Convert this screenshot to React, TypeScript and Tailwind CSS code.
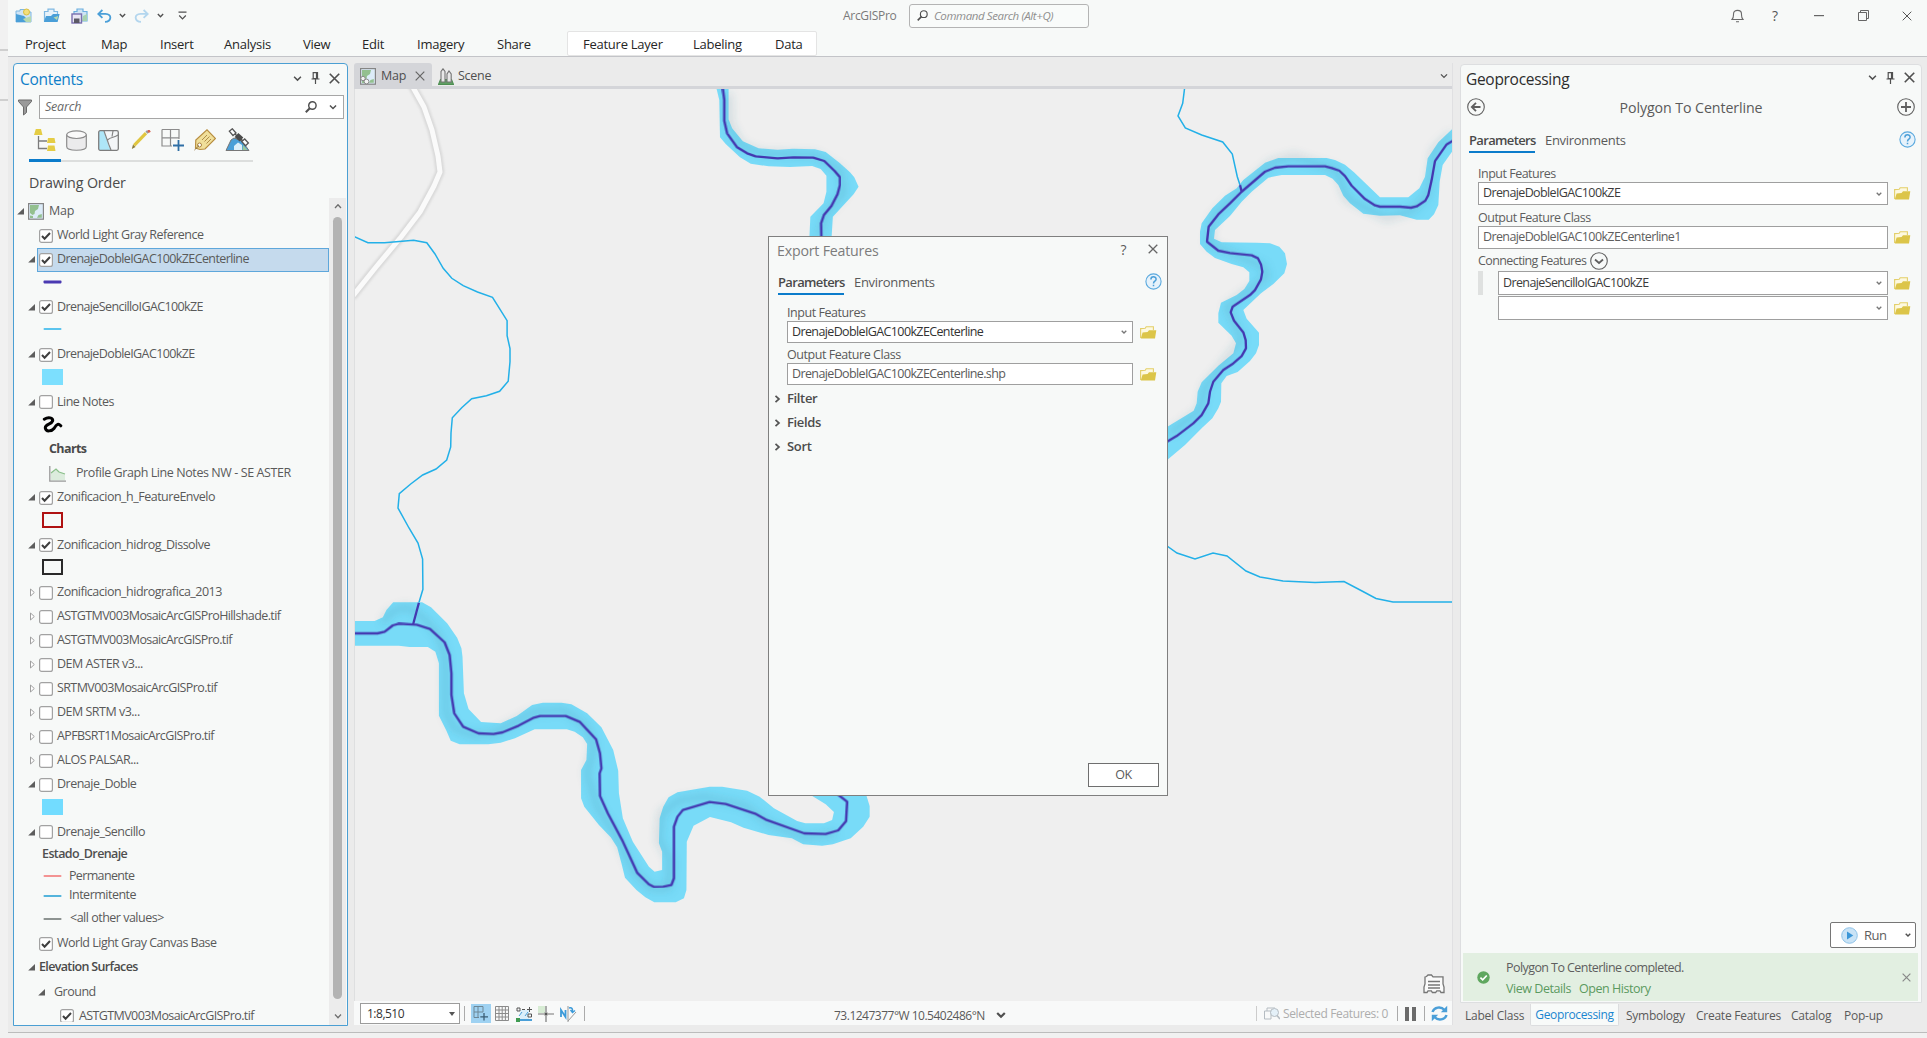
import React from "react";

type P = { children?: React.ReactNode; className?: string };

const Chev = ({ s = 10, w = 1.6, c = "#505050" }: { s?: number; w?: number; c?: string }) => (
  <svg width={s} height={s} viewBox="0 0 10 10" fill="none" stroke={c} strokeWidth={w} className="shrink-0">
    <path d="M1.2 3 L5 6.8 L8.8 3" />
  </svg>
);
const X = ({ s = 11, w = 1.5, c = "#505050" }: { s?: number; w?: number; c?: string }) => (
  <svg width={s} height={s} viewBox="0 0 10 10" fill="none" stroke={c} strokeWidth={w} className="shrink-0">
    <path d="M.7 .7 L9.3 9.3 M9.3 .7 L.7 9.3" />
  </svg>
);
const Pin = () => (
  <svg width="9" height="12" viewBox="0 0 9 12" fill="none" stroke="#505050" strokeWidth="1.2" className="shrink-0">
    <path d="M2.2 .7 H6.5 V6.5 H2.2 Z M.5 7 H8.5 M4.5 7 V12" />
    <path d="M5.8 1 V6.5" strokeWidth="1.8" />
  </svg>
);
const Folder = () => (
  <svg width="17" height="13" viewBox="0 0 17 13" className="shrink-0">
    <path d="M.6 12 V2.6 L5.2 2.3 L6.2 .8 H13.4 V4" fill="#fdf9e0" stroke="#e3cf6a" strokeWidth="1.1" />
    <path d="M.8 12.4 L2.6 6.6 L7.6 6 L9 4.2 H16.3 L15 12.4 Z" fill="#dcc549" />
  </svg>
);
const Help = () => (
  <svg width="17" height="17" viewBox="0 0 17 17" fill="none" className="shrink-0">
    <circle cx="8.5" cy="8.5" r="7.6" fill="#e6f2fb" stroke="#5aa9de" strokeWidth="1.1" />
    <path d="M5.9 6.4 C5.9 3 11.1 3 11.1 6.2 C11.1 8.2 8.5 8.2 8.5 10.4 M8.5 11.8 V13.3" stroke="#4b9fd8" strokeWidth="1.5" />
  </svg>
);
const Magnifier = ({ s = 12, w = 1.6 }: { s?: number; w?: number }) => (
  <svg width={s} height={s} viewBox="0 0 12 12" fill="none" stroke="#505050" className="shrink-0">
    <circle cx="7.4" cy="4.5" r="3.7" strokeWidth={w * 0.9} />
    <path d="M4.8 7.2 L.8 11.3" strokeWidth={w * 1.25} />
  </svg>
);
const Check = ({ on = false }: { on?: boolean }) => (
  <svg width="14" height="14" viewBox="0 0 14 14" className="shrink-0">
    <rect x=".6" y=".6" width="12.8" height="12.8" rx="2" fill="#fff" stroke="#a2a2a2" strokeWidth="1.2" />
    {on && <path d="M3 7 L5.6 9.8 L11 4" fill="none" stroke="#3f3f3f" strokeWidth="2" />}
  </svg>
);
const Tri = ({ open = true }: { open?: boolean }) =>
  open ? (
    <svg width="7" height="7" viewBox="0 0 7 7" className="shrink-0">
      <path d="M7 0 V6.6 H.2 Z" fill="#5d5d5d" />
    </svg>
  ) : (
    <svg width="7" height="9" viewBox="0 0 7 9" className="shrink-0 ml-[2px]">
      <path d="M1.5 1 L5.3 4.5 L1.5 8 Z" fill="#fff" stroke="#a0a0a0" />
    </svg>
  );
const MapIcon = ({ link = false }: { link?: boolean }) => (
  <svg width="16" height="17" viewBox="0 0 16 17" className="shrink-0">
    <rect x=".6" y=".6" width="14.8" height="15.6" fill="#dcecf8" stroke="#858585" strokeWidth="1.2" />
    <path d="M2 2 H11 L10 6 L7 8 L6.5 11 L4.5 12 L2 10 Z" fill="#93c08f" />
    <path d="M10.5 12 L13.8 11 V14.8 H9 Z M2 12.5 L5 13 V15 H2 Z" fill="#93c08f" />
    {link && (
      <g fill="none" stroke="#8a8a8a">
        <circle cx="3" cy="10.5" r="2.2" fill="#f3f3f3" />
        <circle cx="6.5" cy="13.5" r="2.4" fill="#f3f3f3" />
      </g>
    )}
  </svg>
);

const menu: [string, string][] = [
  ["Project", "w-[76px]"],
  ["Map", "w-[59px]"],
  ["Insert", "w-[64px]"],
  ["Analysis", "w-[79px]"],
  ["View", "w-[59px]"],
  ["Edit", "w-[55px]"],
  ["Imagery", "w-[80px]"],
  ["Share", "w-[70px]"],
];

function Header() {
  return (
    <header className="h-[57px] bg-[#f7f9f8] border-b border-[#c3c4c8] flex flex-col shrink-0">
      <div className="h-[31px] flex items-center pr-[8px]">
        <div className="flex items-center w-[180px] pl-[7px] shrink-0">
          <svg width="17" height="16" viewBox="0 0 17 16" className="shrink-0">
            <path d="M1 3 H5 V1.5 H10 V4 H16 V14 H1 Z" fill="#cfe4f5" stroke="#7fb8e2" />
            <path d="M1 6 L9 8 L15 14 H1 Z" fill="#4a9fd8" />
            <path d="M8 11 L16 8 V14 H11 Z" fill="#b7d9ae" />
            <circle cx="11.5" cy="4" r="3" fill="#f3df7c" stroke="#dbbf3f" />
          </svg>
          <svg width="17" height="15" viewBox="0 0 17 15" className="shrink-0 ml-[11px]">
            <path d="M1.5 13 V3.5 H5 V1.2 H11 V3.5 H14.5 V6" fill="#e7f2fa" stroke="#7fb8e2" strokeWidth="1.2" />
            <path d="M.8 14 L3 8 H8 L10 6 H16.6 L14.6 14 Z" fill="#4a9fd8" />
            <path d="M10.5 9.5 L15.2 8 L14 12 Z" fill="#b7d9ae" />
          </svg>
          <svg width="17" height="16" viewBox="0 0 17 16" className="shrink-0 ml-[11px]">
            <path d="M3 6 V3.5 H6 V1 H12 V3.5 H16 V13 H11" fill="#cfe4f5" stroke="#6db0df" strokeWidth="1.2" />
            <path d="M12 8 L16 6 V13 H11 Z" fill="#a8d2b0" />
            <rect x="1" y="6" width="9.5" height="9" fill="#e9e6f4" stroke="#7a6fae" strokeWidth="1.4" />
            <rect x="3" y="10.5" width="5.5" height="4.5" fill="#5c5a66" />
          </svg>
          <svg width="15" height="14" viewBox="0 0 15 14" fill="none" stroke="#4a9fd8" strokeWidth="1.8" className="shrink-0 ml-[9px]">
            <path d="M5.4 1 L1.3 4.9 L5.4 8.8 M1.5 4.9 H8.5 C15.5 5 14.5 12.6 8 12.8" />
          </svg>
          <span className="ml-[7px] flex"><Chev s={7} w={2} /></span>
          <svg width="15" height="14" viewBox="0 0 15 14" fill="none" stroke="#b3d6ee" strokeWidth="1.8" className="shrink-0 ml-[8px]">
            <path d="M9.6 1 L13.7 4.9 L9.6 8.8 M13.5 4.9 H6.5 C-.5 5 .5 12.6 7 12.8" />
          </svg>
          <span className="ml-[8px] flex"><Chev s={7} w={2} /></span>
          <svg width="9" height="10" viewBox="0 0 9 10" fill="none" stroke="#505050" strokeWidth="1.2" className="shrink-0 ml-[14px]">
            <path d="M.5 1.2 H8.5 M1.2 4.5 L4.5 7.8 L7.8 4.5" />
          </svg>
        </div>
        <span className="ml-[655px] w-[66px] text-[12px] text-[#7a7a7a] tracking-[-0.3px]">ArcGISPro</span>
        <div className="w-[180px] h-[24px] border border-[#b4b4b4] rounded-[3px] bg-[#f9fbfa] flex items-center pl-[7px] gap-[6px]">
          <Magnifier s={11} w={1.4} />
          <span className="italic text-[11.5px] text-[#8f8f8f] tracking-[-0.4px]">Command Search (Alt+Q)</span>
        </div>
        <div className="ml-auto flex items-center">
          <svg width="13" height="15" viewBox="0 0 13 15" fill="none" stroke="#6a6a6a" strokeWidth="1.1">
            <path d="M1 11.5 H12 C10.3 10 10.5 8.5 10.5 6 C10.5 1.2 2.5 1.2 2.5 6 C2.5 8.5 2.7 10 1 11.5 Z M5 13.8 H8" />
          </svg>
          <span className="ml-[28px] text-[14px] text-[#555]">?</span>
          <svg width="10" height="2" className="ml-[36px]"><rect width="10" height="1.2" fill="#666" /></svg>
          <svg width="11" height="11" viewBox="0 0 11 11" fill="none" stroke="#666" className="ml-[34px]">
            <path d="M.5 2.5 H8.5 V10.5 H.5 Z M2.5 2.5 V.5 H10.5 V8.5 H8.5" />
          </svg>
          <span className="ml-[33px] mr-[7px]"><X s={10} w={1} c="#555" /></span>
        </div>
      </div>
      <div className="h-[25px] flex items-center text-[13px] text-[#262626] pl-[17px] tracking-[-0.25px]">
        {menu.map(([m, w]) => (
          <span key={m} className={`${w} shrink-0 pt-[2px]`}>{m}</span>
        ))}
        <div className="flex items-center h-[25px] w-[250px] bg-white border border-[#e4e4e4] rounded-[2px] pl-[15px] pt-[2px]">
          <span className="w-[110px]">Feature Layer</span>
          <span className="w-[82px]">Labeling</span>
          <span>Data</span>
        </div>
      </div>
    </header>
  );
}

function Row({ open, on, label, sel, plain }: { open?: boolean; on?: boolean; label: string; sel?: boolean; plain?: boolean }) {
  return (
    <div className="h-[24px] flex items-center pl-[13px] shrink-0">
      <span className="w-[9px] flex justify-center shrink-0">{open !== undefined && <Tri open={open} />}</span>
      <div className={sel ? "h-[24px] w-[292px] flex items-center border border-[#5ea7db] bg-[#c5daed] pl-px ml-px" : "h-[24px] flex items-center pl-[3px]"}>
        <Check on={on} />
        <span className={plain ? "ml-[4px] whitespace-nowrap tracking-[-0.5px]" : "ml-[4px] whitespace-nowrap tracking-[-0.6px]"}>{label}</span>
      </div>
    </div>
  );
}
const Sym = ({ children }: P) => <div className="h-[23.5px] flex items-center pl-[28px] pb-[3px] shrink-0">{children}</div>;
const Line = ({ c, h = 1.6 }: { c: string; h?: number }) => (
  <svg width="20" height="6" className="shrink-0">
    <rect x="1.5" y={3 - h / 2} width="18" height={h} rx=".8" fill={c} />
  </svg>
);
const Swatch = ({ cls }: { cls: string }) => <span className={`block w-[21px] h-[16px] ${cls}`} />;

function Contents() {
  return (
    <section className="w-[335px] h-[963px] border-[1.5px] border-[#4b9fd3] rounded-t-[4px] bg-[#f7f9f8] flex flex-col overflow-hidden text-[#5a5a5a] text-[12.5px] tracking-[-0.5px]">
      <div className="h-[28px] flex items-center pl-[6px] pr-[7px] shrink-0">
        <span className="text-[15.5px] text-[#0f7fc8] grow pt-[3px] tracking-[-0.3px]">Contents</span>
        <Chev s={9} />
        <span className="ml-[9px] flex"><Pin /></span>
        <span className="ml-[9px] flex"><X /></span>
      </div>
      <div className="flex items-center h-[28px] mt-[1px] pl-[4px] shrink-0">
        <svg width="14" height="17" viewBox="0 0 14 17" fill="#9a9a9a" stroke="#6a6a6a" className="shrink-0">
          <path d="M.5 1 H13.5 V2.5 L8.5 8 V13.5 L5.5 16 V8 L.5 2.5 Z" />
        </svg>
        <div className="ml-[7px] w-[305px] h-[24px] bg-white border border-[#a6a6a6] flex items-center pl-[5px] pr-[6px]">
          <span className="italic grow text-[#6a6a6a] tracking-[-0.2px] pt-px">Search</span>
          <Magnifier s={12} />
          <span className="ml-[12px] flex"><Chev s={8} w={1.8} /></span>
        </div>
      </div>
      <div className="flex items-center h-[37px] pl-[14px] mt-[1px] pb-px shrink-0">
        <div className="w-[32px] flex justify-center">
          <svg width="23" height="24" viewBox="0 0 23 24">
            <path d="M5.5 8 V20.5 H14 M5.5 13 H14" fill="none" stroke="#7c7c7c" strokeWidth="1.3" />
            <path d="M1 7 L2.8 1 H8 L9.5 7 Z M14 15 L15 10 H21.5 L22.5 15 Z M14 23 L15 17.5 H21.5 L22.5 23 Z" fill="#e5cd45" />
          </svg>
        </div>
        <div className="w-[32px] flex justify-center">
          <svg width="21" height="21" viewBox="0 0 21 21" fill="#ebebec" stroke="#8c8c8c" strokeWidth="1.2">
            <path d="M.7 4.5 V16.5 C.7 21.5 20.3 21.5 20.3 16.5 V4.5" />
            <ellipse cx="10.5" cy="4.7" rx="9.8" ry="3.8" fill="#fafafa" />
          </svg>
        </div>
        <div className="w-[33px] flex justify-center">
          <svg width="21" height="21" viewBox="0 0 21 21">
            <rect x=".7" y=".7" width="19.6" height="19.6" rx="1.5" fill="#f4f6f8" />
            <path d="M1 1 H6 L11 17 L13 20 H1 Z" fill="#aee6f8" />
            <path d="M6 1 L11 15 L13 20 M9.5 10 C13 6.5 16 8 20 5 M14 6.5 L15 1" fill="none" stroke="#858585" strokeWidth="1.2" />
            <rect x=".7" y=".7" width="19.6" height="19.6" rx="1.5" fill="none" stroke="#7d7d7d" strokeWidth="1.3" />
          </svg>
        </div>
        <div className="w-[31px] flex justify-center">
          <svg width="20" height="20" viewBox="0 0 20 20">
            <path d="M3.2 15.3 L15 3.2" stroke="#e0c640" strokeWidth="3.2" />
            <path d="M15.5 2.8 L17 1.2" stroke="#9b9b9b" strokeWidth="3" />
            <path d="M17 1.8 L19 .5" stroke="#d9644f" strokeWidth="2.8" />
            <path d="M.8 19 L2 14.5 L4.5 17 Z" fill="#8b7a3a" />
          </svg>
        </div>
        <div className="w-[33px] flex justify-center">
          <svg width="24" height="24" viewBox="0 0 24 24" fill="none">
            <path d="M1 1.5 H18 V11 M1 1.5 V18 H11 M9.5 1.5 V18 M1 9.8 H18" stroke="#8c8c8c" strokeWidth="1.2" />
            <path d="M17.5 12 V23 M12 17.5 H23" stroke="#2f6fa5" strokeWidth="1.8" />
          </svg>
        </div>
        <div className="w-[32px] flex justify-center">
          <svg width="22" height="22" viewBox="0 0 22 22">
            <path d="M1.5 19 L1.8 11 L13 .8 L21.5 9.5 L11 20 L6 20.5 Z" fill="#f0df9a" stroke="#b88f42" strokeWidth="1.2" />
            <circle cx="5.5" cy="16" r="2" fill="#fff" stroke="#a98241" />
            <path d="M8 11 L13 6 M10.5 12.5 L15.5 7.5 M12.5 14.5 L17 10" stroke="#b08c4a" />
            <path d="M5 16.5 C3 18 2 20 .5 21" fill="none" stroke="#8b6d36" />
          </svg>
        </div>
        <div className="w-[32px] flex justify-center">
          <svg width="25" height="24" viewBox="0 0 25 24">
            <path d="M1 22.5 L6 12 L9 10 L17 13 L24 22.5 Z" fill="#4a9fd8" stroke="#777" />
            <path d="M9 22 V18 L13 14.5 L17 17 V22 Z" fill="#dceffa" />
            <path d="M18 17 L22.5 22 H17.5 Z" fill="#9ac79a" />
            <path d="M7 3.5 L21 15.5" stroke="#555" strokeWidth="1.6" />
            <path d="M11.5 7 L16.5 11.5" stroke="#4b4b4b" strokeWidth="5.5" />
            <path d="M4.3 3.2 L7.3 .8 L11 5 L8 7.5 Z M16.7 13.5 L19.7 11 L23.4 15 L20.5 17.8 Z" fill="#fff" stroke="#555" strokeWidth="1.3" />
          </svg>
        </div>
      </div>
      <div className="ml-[15px] w-[224px] h-[3px] border-b-2 border-[#dcdedd] shrink-0">
        <div className="w-[32px] h-[3px] bg-[#0c7ccb]" />
      </div>
      <div className="text-[14.3px] text-[#4b4b4b] font-medium pl-[15px] mt-[10px] h-[26px] leading-[22px] tracking-[-0.15px] shrink-0">Drawing Order</div>
      <div className="flex grow min-h-0">
        <div className="w-[315px] h-[824px] overflow-hidden flex flex-col shrink-0 pt-[1.5px]">
          <div className="h-[24px] flex items-center pl-[3px] shrink-0">
            <Tri />
            <span className="ml-[4px] flex"><MapIcon /></span>
            <span className="ml-[5px] tracking-[-0.2px]">Map</span>
          </div>
          <Row on plain label="World Light Gray Reference" />
          <Row open on sel label="DrenajeDobleIGAC100kZECenterline" />
          <Sym><Line c="#4a3ab2" h={2.8} /></Sym>
          <Row open on label="DrenajeSencilloIGAC100kZE" />
          <Sym><Line c="#28b2ea" /></Sym>
          <Row open on label="DrenajeDobleIGAC100kZE" />
          <Sym><Swatch cls="bg-[#7cdffe]" /></Sym>
          <Row open plain label="Line Notes" />
          <Sym>
            <svg width="21" height="17" viewBox="0 0 21 17" fill="none" stroke="#000" strokeWidth="3" strokeLinecap="round" strokeLinejoin="round" className="shrink-0">
              <path d="M2.3 3.2 C6 .8 11.5 1.5 10.6 5 C9.5 8.5 3 8 3.3 12 C4 16.5 10 15 12 12.5 C15 7.5 16.5 7.5 18.8 9.8" />
            </svg>
          </Sym>
          <div className="h-[24px] flex items-center pl-[35px] font-bold text-[#4a4a4a] tracking-[-0.6px] shrink-0">Charts</div>
          <div className="h-[24px] flex items-center pl-[35px] shrink-0">
            <svg width="17" height="16" viewBox="0 0 17 16" fill="none" className="shrink-0">
              <path d="M2 7 L7 3 L10 6 L16 8 V14.5 H2 Z" fill="#dcecdd" />
              <path d="M2 7 L7 3 L10 6 L16 8" stroke="#8cc08c" strokeWidth="1.3" />
              <path d="M.8 0 V15.2 H17" stroke="#9a9a9a" strokeWidth="1.3" />
            </svg>
            <span className="ml-[10px] whitespace-nowrap tracking-[-0.42px]">Profile Graph Line Notes NW - SE ASTER</span>
          </div>
          <Row open on plain label="Zonificacion_h_FeatureEnvelo" />
          <Sym><Swatch cls="border-[2px] border-[#b01212]" /></Sym>
          <Row open on plain label="Zonificacion_hidrog_Dissolve" />
          <Sym><Swatch cls="border-[2px] border-[#2a2a2a]" /></Sym>
          <Row open={false} plain label="Zonificacion_hidrografica_2013" />
          <Row open={false} label="ASTGTMV003MosaicArcGISProHillshade.tif" />
          <Row open={false} label="ASTGTMV003MosaicArcGISPro.tif" />
          <Row open={false} plain label="DEM ASTER v3..." />
          <Row open={false} label="SRTMV003MosaicArcGISPro.tif" />
          <Row open={false} plain label="DEM SRTM v3..." />
          <Row open={false} label="APFBSRT1MosaicArcGISPro.tif" />
          <Row open={false} plain label="ALOS PALSAR..." />
          <Row open plain label="Drenaje_Doble" />
          <Sym><Swatch cls="bg-[#72dcff]" /></Sym>
          <Row open plain label="Drenaje_Sencillo" />
          <div className="h-[21px] flex items-center pl-[28px] font-semibold text-[#4f4f4f] tracking-[-0.6px] shrink-0">Estado_Drenaje</div>
          <div className="h-[21px] flex items-center pl-[28px] pt-px shrink-0"><Line c="#f27272" /><span className="ml-[7px] tracking-[-0.65px]">Permanente</span></div>
          <div className="h-[19.5px] flex items-center pl-[28px] shrink-0"><Line c="#54b4dc" h={2} /><span className="ml-[7px]">Intermitente</span></div>
          <div className="h-[26px] flex items-center pl-[28px] shrink-0"><Line c="#8d9391" h={2} /><span className="ml-[8px]">&lt;all other values&gt;</span></div>
          <Row on plain label="World Light Gray Canvas Base" />
          <div className="h-[24px] flex items-center pl-[14px] font-semibold text-[#4a4a4a] tracking-[-0.65px] shrink-0"><Tri /><span className="ml-[4px]">Elevation Surfaces</span></div>
          <div className="h-[26px] flex items-center pl-[24px] shrink-0"><Tri /><span className="ml-[9px]">Ground</span></div>
          <div className="h-[21px] flex items-center pl-[46px] shrink-0"><Check on /><span className="ml-[5px] tracking-[-0.6px]">ASTGTMV003MosaicArcGISPro.tif</span></div>
        </div>
        <div className="w-[17px] bg-[#ececec] flex flex-col items-center shrink-0">
          <svg width="8" height="18" viewBox="0 0 8 18" fill="none" stroke="#6e6e6e" strokeWidth="1.3"><path d="M1 10 L4 6.8 L7 10" /></svg>
          <div className="w-[9px] h-[783px] rounded-full bg-[#b3b3b3] mt-[1px]" />
          <svg width="8" height="20" viewBox="0 0 8 20" fill="none" stroke="#6e6e6e" strokeWidth="1.3" className="mt-[6px]"><path d="M1 9.5 L4 12.7 L7 9.5" /></svg>
        </div>
      </div>
    </section>
  );
}

const riverA = "M1054 85 L1088 85 L1088 178 L1098 205 L1128 244 L1172 265 L1225 269 L1268 266 L1330 268 L1360 276 L1400 310 L1428 337 L1440 352 L1452 380 L1438 403 L1380 470 L1376 540 L1314 540 L1317 470 L1354 430 L1362 395 L1362 347 L1346 327 L1322 318 L1260 321 L1200 319 L1150 311 L1120 292 L1080 252 L1064 232 L1062 120 Z";
const centerA = "M1072 85 L1076 120 L1076 182 L1084 220 L1112 262 L1140 280 L1164 289 L1225 295 L1270 292 L1325 293 L1356 303 L1385 333 L1400 352 L1400 375 L1393 403 L1376 438 L1355 465 L1347 490 L1348 540";
const riverB = "M30 183 L97 183 L120 172 L130 150 L149 127 L230 127 L255 142 L300 190 L328 233 L340 265 L343 290 L347 400 L360 447 L395 486 L450 490 L495 468 L538 435 L568 428 L620 428 L648 433 L692 460 L732 502 L765 570 L779 632 L781 700 L792 775 L820 845 L865 920 L881 935 L902 930 L902 875 L893 850 L895 775 L905 740 L920 712 L945 697 L1035 680 L1070 680 L1140 692 L1175 710 L1215 745 L1280 783 L1303 790 L1355 790 L1378 780 L1383 756 L1360 733 L1310 700 L1472 700 L1483 738 L1483 770 L1465 800 L1430 835 L1380 853 L1350 857 L1297 853 L1265 835 L1200 825 L1130 803 L1095 787 L1036 771 L990 797 L971 845 L970 990 L963 1015 L940 1027 L880 1027 L855 1012 L830 990 L798 953 L788 910 L776 862 L758 832 L725 795 L684 740 L675 715 L675 630 L690 600 L692 552 L680 532 L657 515 L635 508 L545 508 L490 535 L450 548 L415 553 L335 553 L310 542 L298 512 L277 467 L277 310 L267 275 L246 261 L195 261 L165 257 L30 257 Z";
const centerB = "M30 220 L105 220 L125 215 L148 196 L165 191 L215 194 L252 207 L293 247 L307 285 L312 340 L312 405 L320 460 L345 500 L388 520 L430 522 L455 517 L500 497 L540 474 L560 468 L632 468 L672 486 L717 538 L728 580 L732 625 L727 640 L728 708 L750 760 L790 840 L832 938 L865 973 L880 981 L905 980 L928 975 L935 955 L935 800 L945 770 L960 750 L1035 726 L1080 732 L1165 762 L1195 780 L1300 820 L1360 822 L1395 811 L1417 783 L1420 725 L1390 700";
const riverC = "M920 135 L909 145 L865 187 L833 235 L825 290 L808 325 L775 352 L690 352 L612 277 L585 254 L555 240 L530 234 L385 234 L345 248 L280 300 L260 325 L225 347 L187 385 L155 430 L150 455 L150 492 L170 515 L195 534 L245 552 L280 562 L298 577 L298 603 L283 627 L260 645 L213 668 L205 700 L205 728 L245 767 L258 790 L250 820 L205 857 L155 907 L143 935 L140 970 L131 992 L40 1048 L40 1150 L105 1095 L155 1045 L187 1015 L205 985 L213 965 L214 910 L230 888 L263 876 L300 843 L318 820 L327 795 L327 758 L290 716 L280 690 L333 640 L370 612 L403 580 L411 552 L405 520 L388 500 L360 490 L320 488 L215 487 L192 476 L195 450 L240 408 L275 365 L305 335 L355 293 L395 285 L525 285 L548 296 L565 315 L580 347 L600 370 L640 401 L690 407 L750 406 L800 419 L836 419 L852 403 L865 375 L869 305 L878 255 L920 195 Z";
const centerC = "M920 177 L909 182 L890 193 L855 243 L845 300 L835 345 L826 362 L800 379 L783 383 L750 380 L690 380 L675 376 L645 357 L605 317 L585 288 L568 272 L545 264 L525 259 L415 259 L375 263 L345 275 L275 335 L240 370 L205 403 L176 440 L171 485 L205 512 L240 519 L305 526 L324 535 L333 553 L337 575 L333 598 L315 630 L300 645 L248 680 L242 697 L252 722 L280 757 L287 780 L288 805 L275 828 L250 850 L220 870 L190 905 L180 935 L175 970 L155 1005 L130 1030 L80 1068 L40 1092 M270 315 L275 335";

const shadeB = "M120 190 L140 158 L185 140 L230 170 L275 225 L295 290 L297 460 L320 505 L370 525 L430 520 L490 485 L545 455 L630 450 L690 500 L712 560 L692 640 L720 740 L775 830 L820 930 L870 985 L920 985 L925 900 L893 840 L900 760 L950 720 L1020 710 L1130 735 L1200 790 L1300 832 L1390 820";
const shadeC = "M905 160 L850 215 L835 340 L790 390 L710 415 L590 355 L560 270 L430 228 L360 250 L190 410 L175 490 L340 560 L350 590 L230 680 L275 780 L165 920 L150 990 L60 1060";

function MapCanvas() {
  return (
    <svg className="absolute inset-0" width="1098" height="912" viewBox="355 89 1098 912" fill="none">
      <defs>
        <filter id="soft" x="-20%" y="-20%" width="140%" height="140%"><feGaussianBlur stdDeviation="4" /></filter>
        <filter id="road" x="-20%" y="-20%" width="140%" height="140%"><feGaussianBlur stdDeviation="1" /></filter>
      </defs>
      <g strokeLinejoin="round">
        <path d="M410 82 L424 107 L432 130 L438 156 L440 172 L434 186 L420 212 L401 237 L376 267 L352 297" stroke="#d9d9d9" strokeWidth="9" filter="url(#road)" />
        <path d="M410 82 L424 107 L432 130 L438 156 L440 172 L434 186 L420 212 L401 237 L376 267 L352 297" stroke="#fafafa" strokeWidth="5" />
      </g>
      <path d="M350 235 L355 237 L367.9 242.7 L384.6 242.7 L413.6 240.3 L426.8 242.7 L435 254 L443.2 268.3 L451.8 278.3 L463.2 285.7 L477.5 292 L492.5 297.3 L507.1 320.7 L507.1 335.7 L510 348.7 L510 361.7 L508.2 381.3 L499.6 391.3 L486.4 395.7 L471.7 398.7 L461.7 407.7 L452.3 417.7 L451 433 L450.7 447 L446.7 460 L436 469 L422.7 475 L410.7 484 L399.3 493.7 L398 508 L409 528 L418 543 L422.6 559 L422.9 589.3 L418.9 602.7" stroke="#22b0e8" strokeWidth="1.5" />
      <path d="M1185 85 L1182.7 103.3 L1178 116 L1185.3 128 L1201.7 135 L1222.7 142 L1232.3 154 L1237.3 176.7 L1240 185" stroke="#22b0e8" strokeWidth="1.5" />
      <path d="M1160 541 L1177 553 L1195 559 L1213 553 L1227 556 L1246 571 L1260 577 L1283 581 L1315 582.5 L1344 581.5 L1362 591 L1376 598.5 L1393 602 L1455 602" stroke="#22b0e8" strokeWidth="1.5" />
      <g fill="#78dbf8">
        <path d={riverA} transform="translate(340 60) scale(.35714 .33333)" />
        <path d={riverB} transform="translate(340 560) scale(.35714 .33333)" />
        <path d={riverC} transform="translate(1150 80) scale(.33333)" />
      </g>
      <g stroke="#3d7d92" strokeOpacity=".25" filter="url(#soft)" strokeLinejoin="round">
        <path d={shadeB} transform="translate(340 560) scale(.35714 .33333)" strokeWidth="14" />
        <path d={shadeC} transform="translate(1150 80) scale(.33333)" strokeWidth="14" />
        <path d="M1088 100 L1090 190 L1120 255 L1180 280 L1330 285 L1400 330 L1410 400 L1360 460 L1340 530" transform="translate(340 60) scale(.35714 .33333)" strokeWidth="14" />
      </g>
      <g stroke="#4438b0" strokeLinejoin="round" strokeWidth="7">
        <path d={centerA} transform="translate(340 60) scale(.35714 .33333)" />
        <path d={centerB} transform="translate(340 560) scale(.35714 .33333)" />
        <path d={centerC} transform="translate(1150 80) scale(.33333)" />
        <path d="M418.9 602.7 L413.2 624" strokeWidth="2.3" />
      </g>
    </svg>
  );
}

const Field = ({ children, arrow, className = "" }: P & { arrow?: boolean }) => (
  <div className={`bg-white border border-[#9f9f9f] flex items-center pl-[4px] pr-[5px] tracking-[-0.62px] ${className}`}>
    <span className="grow whitespace-nowrap">{children}</span>
    {arrow && <Chev s={6} w={2.2} c="#777" />}
  </div>
);
const Tabs = ({ className = "" }: P) => (
  <div className={`flex items-start text-[13px] text-[#5a5a5a] ${className}`}>
    <span className="h-[22px] w-[66px] leading-[18px] border-b-2 border-[#0c7ccb] font-semibold text-[#4a4a4a] tracking-[-0.65px]">Parameters</span>
    <span className="ml-[10px] leading-[18px] tracking-[-0.3px] grow">Environments</span>
    <Help />
  </div>
);

function Dialog() {
  return (
    <div className="absolute left-[413px] top-[147px] w-[400px] h-[560px] border border-[#7f7f7f] bg-[#f7f9f8] flex flex-col text-[12.5px] text-[#5a5a5a] tracking-[-0.45px]">
      <div className="h-[36px] flex items-center pl-[8px] pr-[9px] shrink-0">
        <span className="grow text-[14.2px] text-[#7c7c7c] mt-[-9px] tracking-[-0.2px]">Export Features</span>
        <span className="text-[14px] mt-[-11px] font-medium">?</span>
        <span className="ml-[22px] mt-[-12px]"><X s={10} w={1.3} c="#666" /></span>
      </div>
      <Tabs className="pl-[9px] pr-[5px] shrink-0" />
      <div className="pl-[18px] flex flex-col">
        <span className="mt-[9px] h-[17px] leading-[18px]">Input Features</span>
        <div className="flex items-center">
          <Field arrow className="w-[346px] h-[22px] text-[#333]">DrenajeDobleIGAC100kZECenterline</Field>
          <span className="ml-[7px]"><Folder /></span>
        </div>
        <span className="mt-[3px] h-[17px] leading-[18px]">Output Feature Class</span>
        <div className="flex items-center">
          <Field className="w-[346px] h-[22px]">DrenajeDobleIGAC100kZECenterline.shp</Field>
          <span className="ml-[7px]"><Folder /></span>
        </div>
      </div>
      <div className="flex flex-col mt-[2px] pl-[5px] font-semibold text-[13px] text-[#4c4c4c] tracking-[-0.35px]">
        {["Filter", "Fields", "Sort"].map((t) => (
          <div key={t} className="h-[24px] flex items-center">
            <svg width="7" height="8" viewBox="0 0 7 8" fill="none" stroke="#555" strokeWidth="1.7"><path d="M1.5 .8 L5 4 L1.5 7.2" /></svg>
            <span className="ml-[6px]">{t}</span>
          </div>
        ))}
      </div>
      <div className="mt-auto mb-[8px] ml-auto mr-[8px] w-[71px] h-[24px] border border-[#6f6f6f] bg-white flex items-center justify-center text-[12.5px]">OK</div>
    </div>
  );
}

function MapPane() {
  return (
    <section className="w-[1099px] flex flex-col ml-[6px] border-r border-[#e0e0e2]">
      <div className="h-[23px] flex text-[12.5px] text-[#4f4f4f] tracking-[-0.25px]">
        <div className="w-[78px] bg-[#d4d5d9] rounded-t-[3px] flex items-center pl-[6px] pt-[3px]">
          <MapIcon link />
          <span className="ml-[5px]">Map</span>
          <span className="ml-[9px]"><X s={10} w={1.2} c="#666" /></span>
        </div>
        <div className="flex items-center pl-[6px] pt-[3px] grow">
          <svg width="16" height="17" viewBox="0 0 16 17" fill="#e8e8e8" stroke="#757575" strokeWidth="1.1">
            <path d="M.5 16.5 L2.5 11.5 H13.5 L15.5 16.5 Z" fill="#5f9f63" stroke="#4f8f53" />
            <path d="M3 14 V3.5 L5 .8 L7 3.5 V14 Z M9 14 V6 L11 3 L13.2 6 V14 Z" />
          </svg>
          <span className="ml-[4px]">Scene</span>
        </div>
        <div className="flex items-center pr-[4px] pt-[3px]"><Chev s={8} /></div>
      </div>
      <div className="h-[3px] bg-[#d4d5d9]" />
      <div className="h-[912px] bg-[#efefef] relative overflow-hidden border-l border-[#dedfe0]">
        <MapCanvas />
        <Dialog />
        <svg className="absolute right-[7px] bottom-[7px]" width="22" height="20" viewBox="0 0 22 20" fill="#fafafa" stroke="#757575" strokeWidth="1.3">
          <path d="M2 3 L3.5 2.5 L5 1 H8.5 L10 2.8 H20 V10 L21 13 V18.5 H18 L17 16.8 H13.8 L12.6 18.5 H9.4 L8.4 16.8 H5 L4 18.5 H1 V13 L2 10 Z" />
          <path d="M5 7.5 H17 M5 11 H17 M5 14 H17" />
        </svg>
      </div>
      <div className="h-[24px] bg-[#f8f9f9] flex items-center pl-[6px] pt-px text-[12px] text-[#5a5a5a] tracking-[-0.5px]">
        <div className="w-[100px] h-[21px] bg-white border border-[#9c9c9c] flex items-center pl-[6px] pr-[4px]">
          <span className="grow text-[#333] tracking-[-0.5px]">1:8,510</span>
          <svg width="6" height="4" viewBox="0 0 6 4"><path d="M0 0 H6 L3 4 Z" fill="#555" /></svg>
        </div>
        <span className="ml-[4px] w-px h-[15px] bg-[#ababab]" />
        <svg width="20" height="19" viewBox="0 0 20 19" className="ml-[6px]" fill="none">
          <rect width="20" height="19" fill="#9fd2f2" />
          <path d="M3 2.5 H12 V8 M3 2.5 V13.5 H8 M7 2.5 V13.5 M3 8 H12" stroke="#6d8796" />
          <path d="M13 9 V16.5 M9.3 12.8 H17" stroke="#3b5d74" strokeWidth="1.3" />
        </svg>
        <svg width="14" height="15" viewBox="0 0 14 15" className="ml-[4px]" fill="none" stroke="#8b8b8b">
          <path d="M.5 .5 H13.5 V14.5 H.5 Z M4 .5 V14.5 M7.2 .5 V14.5 M10.4 .5 V14.5 M.5 4 H13.5 M.5 7.5 H13.5 M.5 11 H13.5" />
        </svg>
        <svg width="17" height="16" viewBox="0 0 17 16" className="ml-[7px]" fill="none">
          <rect x="4" y="4" width="9" height="9" fill="#dbeefa" />
          <path d="M1 2 H4 V5 H1 Z M12 8 H15.5 V11 H12 Z" stroke="#555" />
          <path d="M6 3.5 H9 M11 3.5 H16 M13.5 1 V6" stroke="#555" />
          <path d="M3 10 L6 6 M9 10 L12 6" stroke="#4a9fd8" />
          <path d="M4 14 H16" stroke="#4a9fd8" strokeWidth="2" />
          <rect x="0" y="12" width="4" height="4" fill="#3f9b52" />
        </svg>
        <svg width="16" height="16" viewBox="0 0 16 16" className="ml-[5px]" fill="none">
          <rect x="0" y="0" width="7" height="7" fill="#d7ecd4" />
          <path d="M8 0 V6 M8 10 V16 M0 8 H6 M10 8 H16" stroke="#777" strokeWidth="1.2" />
          <rect x="6.5" y="6.5" width="3" height="3" fill="#555" />
        </svg>
        <svg width="17" height="16" viewBox="0 0 17 16" className="ml-[6px]" fill="none">
          <path d="M1 11 V4 L5.5 11 V4" stroke="#3b9ad9" strokeWidth="1.8" />
          <path d="M8 0 V16 M8 15 L16 6" stroke="#999" />
          <path d="M9 2 C12 1 13 3 12.5 6 M10.5 4 L12.5 6.5 L15 4.5" stroke="#3b9ad9" strokeWidth="1.4" />
        </svg>
        <span className="ml-[7px] w-px h-[15px] bg-[#ababab]" />
        <span className="ml-[249px] w-[162px] mt-[4px] whitespace-nowrap">73.1247377°W 10.5402486°N</span>
        <span className="flex mt-[3px]"><Chev s={10} w={2.2} /></span>
        <div className="ml-auto flex items-center pr-[4px] text-[#adadad]">
          <span className="w-px h-[15px] bg-[#ccc]" />
          <svg width="16" height="15" viewBox="0 0 16 15" className="ml-[7px]" fill="none" stroke="#b5bcc2">
            <path d="M.5 5 H7 V13 H.5 Z M3 5 V2 H11" />
            <circle cx="10.5" cy="6.5" r="4" fill="#e4f0f8" />
            <path d="M13 9.5 L16 13" strokeWidth="1.6" />
          </svg>
          <span className="ml-[3px] w-[109px] whitespace-nowrap tracking-[-0.35px]">Selected Features: 0</span>
          <span className="ml-[5px] w-px h-[15px] bg-[#aaa]" />
          <span className="ml-[7px] w-[4px] h-[14px] bg-[#6b6b6b]" />
          <span className="ml-[3px] w-[4px] h-[14px] bg-[#6b6b6b]" />
          <span className="ml-[8px] w-px h-[15px] bg-[#aaa]" />
          <svg width="17" height="17" viewBox="0 0 17 17" className="ml-[6px]" fill="none" stroke="#4b9fd8" strokeWidth="2.4">
            <path d="M1.5 7 C3 2 10 1 13.5 5 M15.5 10 C14 15 7 16 3.5 12" />
            <path d="M16.2 .8 V7.2 H9.8 Z M.8 16.2 V9.8 H7.2 Z" fill="#4b9fd8" stroke="none" />
          </svg>
        </div>
      </div>
    </section>
  );
}

const Circ = ({ children }: P) => (
  <svg width="18" height="18" viewBox="0 0 18 18" fill="none" stroke="#5f5f5f" strokeWidth="1.1" className="shrink-0">
    <circle cx="9" cy="9" r="8.3" />
    <g strokeWidth="1.8">{children}</g>
  </svg>
);

function Geo() {
  return (
    <section className="w-[462px] ml-[7px] flex flex-col mt-px">
      <div className="h-[939px] bg-[#f7f9f8] border border-[#dddee0] rounded-t-[4px] flex flex-col text-[12.5px] text-[#5e5e5e] tracking-[-0.5px]">
        <div className="h-[28px] flex items-center pl-[5px] pr-[6px] shrink-0">
          <span className="text-[15.5px] text-[#2d2d2d] grow pt-[2px] tracking-[-0.3px]">Geoprocessing</span>
          <span className="flex pb-[3px]"><Chev s={9} /></span>
          <span className="ml-[9px] flex pb-[3px]"><Pin /></span>
          <span className="ml-[9px] flex pb-[3px]"><X /></span>
        </div>
        <div className="h-[27px] flex items-center pl-[6px] pr-[6px] shrink-0">
          <Circ><path d="M13.5 9 H5 M9 4.8 L4.8 9 L9 13.2" /></Circ>
          <span className="grow text-center text-[14.2px] tracking-[-0.08px] text-[#5a5a5a] pt-[2px]">Polygon To Centerline</span>
          <Circ><path d="M9 4 V14 M4 9 H14" /></Circ>
        </div>
        <Tabs className="pl-[8px] pr-[5px] pt-[11px] shrink-0" />
        <div className="pl-[17px] flex flex-col">
          <span className="mt-[12px] h-[17px] leading-[17px]">Input Features</span>
          <div className="flex items-center">
            <Field arrow className="w-[410px] h-[23px] text-[#3c3c3c]">DrenajeDobleIGAC100kZE</Field>
            <span className="ml-[6px]"><Folder /></span>
          </div>
          <span className="mt-[4px] h-[17px] leading-[17px]">Output Feature Class</span>
          <div className="flex items-center">
            <Field className="w-[410px] h-[23px]">DrenajeDobleIGAC100kZECenterline1</Field>
            <span className="ml-[6px]"><Folder /></span>
          </div>
          <div className="flex items-center h-[22px]">
            <span className="pt-[2px] w-[109px] whitespace-nowrap tracking-[-0.6px]">Connecting Features</span>
            <span className="ml-[3px] mt-[2px] flex"><Circ><path d="M5 7.5 L9 11 L13 7.5" /></Circ></span>
          </div>
          <div className="flex items-center">
            <span className="w-[5px] h-[24px] bg-[#dfe1e0]" />
            <Field arrow className="ml-[15px] w-[390px] h-[24px] text-[#3c3c3c]">DrenajeSencilloIGAC100kZE</Field>
            <span className="ml-[6px]"><Folder /></span>
          </div>
          <div className="flex items-center mt-px">
            <Field arrow className="ml-[20px] w-[390px] h-[24px]" />
            <span className="ml-[6px]"><Folder /></span>
          </div>
        </div>
        <div className="mt-auto ml-auto mr-[5px] w-[86px] h-[26px] border border-[#767676] rounded-[2px] bg-white flex items-center pl-[10px] pr-[4px] text-[13px] shrink-0">
          <svg width="17" height="17" viewBox="0 0 17 17"><circle cx="8.5" cy="8.5" r="7.8" fill="#c9e3f6" stroke="#8fc3e8" /><path d="M6 4.5 L12.3 8.5 L6 12.5 Z" fill="#3b97d8" /></svg>
          <span className="ml-[6px] grow pt-px">Run</span>
          <Chev s={6} w={2.4} />
        </div>
        <div className="mt-[5px] ml-[2px] mr-[3px] mb-px h-[48px] bg-[#e2efe1] flex items-center pl-[14px] pr-[7px] shrink-0">
          <svg width="13" height="13" viewBox="0 0 13 13"><circle cx="6.5" cy="6.5" r="6.2" fill="#5fa75f" /><path d="M3.4 6.6 L5.7 8.9 L9.8 4.5" fill="none" stroke="#fff" strokeWidth="1.7" /></svg>
          <div className="ml-[16px] grow flex flex-col pt-[2px]">
            <span className="h-[21px] leading-[21px] tracking-[-0.57px]">Polygon To Centerline completed.</span>
            <span className="h-[21px] leading-[21px] text-[#5b9a5f] tracking-[-0.45px]"><span className="mr-[8px]">View Details</span>Open History</span>
          </div>
          <X s={9} w={1.3} c="#888" />
        </div>
      </div>
      <div className="h-[22px] flex items-start text-[12px] text-[#5a5a5a] leading-[22px] tracking-[-0.25px] whitespace-nowrap pt-px">
        <span className="w-[70px] pl-[5px] pt-px">Label Class</span>
        <span className="w-[89px] h-[22px] bg-[#f8faf9] border border-t-0 border-[#dcdddf] text-center text-[#1a86d0] rounded-b-[2px] tracking-[-0.35px]">Geoprocessing</span>
        <span className="ml-[7px] w-[70px] pt-px">Symbology</span>
        <span className="w-[95px] pt-px">Create Features</span>
        <span className="w-[53px] pt-px">Catalog</span>
        <span className="pt-px">Pop-up</span>
      </div>
    </section>
  );
}

export default function App() {
  return (
    <div className="w-[1927px] h-[1038px] overflow-hidden flex bg-[#f1f1f1] font-['Open_Sans',sans-serif] font-stretch-[95%]">
      <div className="w-[8px] shrink-0 flex flex-col">
        <div className="h-[51px] border-b-2 border-[#cfcfcf]" />
        <div className="h-[50px] border-b-2 border-[#cfcfcf]" />
      </div>
      <div className="grow flex flex-col">
        <Header />
        <main className="h-[976px] bg-[#ebebeb] border-b border-[#bcbcbc] flex pl-[5px] pt-[6px] items-start">
          <Contents />
          <MapPane />
          <Geo />
        </main>
      </div>
    </div>
  );
}
